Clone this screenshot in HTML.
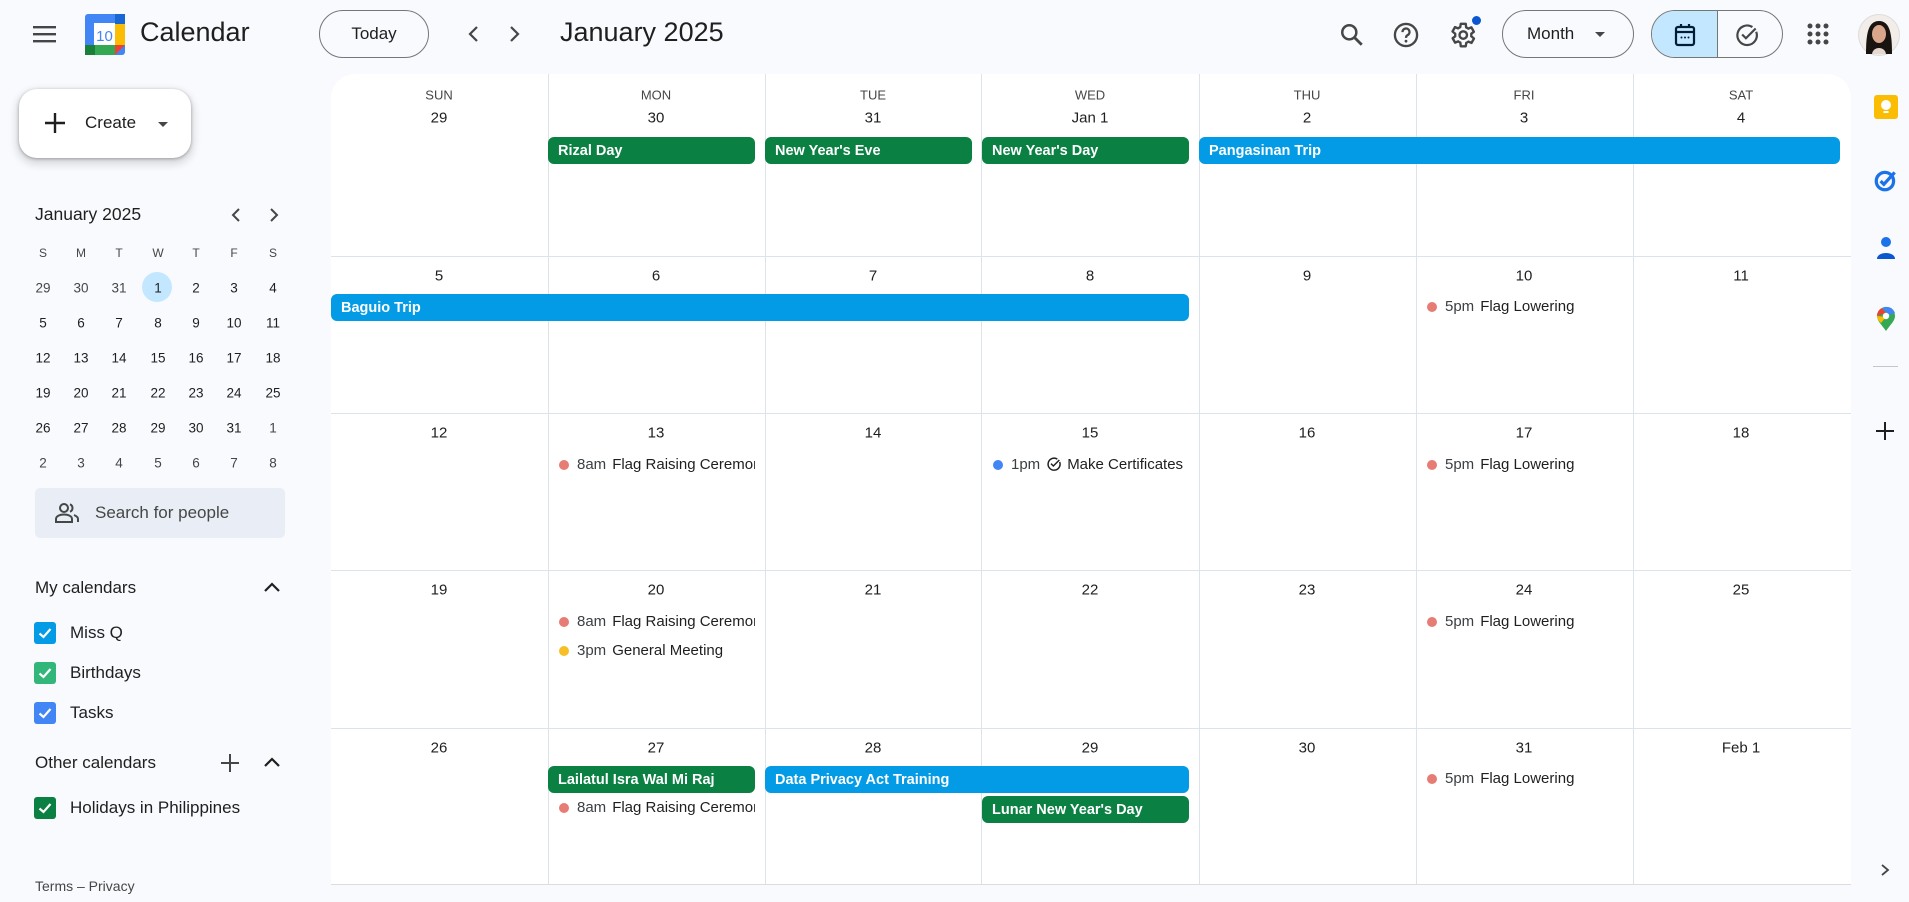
<!DOCTYPE html>
<html><head><meta charset="utf-8"><style>
*{box-sizing:border-box;margin:0;padding:0}
body{width:1909px;height:902px;background:#f8fafd;font-family:"Liberation Sans",sans-serif;color:#1f1f1f;position:relative;overflow:hidden}
.a{position:absolute}
.c{position:absolute;transform:translate(-50%,-50%);white-space:nowrap}
.grid{position:absolute;left:331px;top:74px;width:1520px;height:811px;background:#fff;border-radius:24px 24px 0 0;border-bottom:1px solid #dadce0}
.vl{position:absolute;top:0;bottom:0;width:1px;background:#dde3ea}
.hl{position:absolute;left:0;right:0;height:1px;background:#dde3ea}
.dh{position:absolute;transform:translate(-50%,-50%);font-size:13px;color:#444746}
.dn{position:absolute;transform:translate(-50%,-50%);font-size:15px;color:#1f1f1f}
.chip{position:absolute;height:27px;border-radius:6px;color:#fff;font-weight:bold;font-size:14.5px;line-height:28px;padding-left:10px;white-space:nowrap;overflow:hidden}
.g{background:#0b8043}.b{background:#039be5}
.ev{position:absolute;height:22px;line-height:22px;font-size:15px;white-space:nowrap;overflow:hidden;width:200px;padding-left:29px;color:#1f1f1f}
.ev i{position:absolute;left:11px;top:6px;width:10px;height:10px;border-radius:50%}
.ev s{text-decoration:none;color:#3c4043;margin-right:6px}
.mc{position:absolute;transform:translate(-50%,-50%);font-size:13.5px;color:#1f1f1f}
.cb{position:absolute;left:34px;width:22px;height:22px;border-radius:3px}
.cb svg{position:absolute;left:3px;top:3px}
.lbl{position:absolute;left:70px;font-size:17px;transform:translateY(-50%)}
</style></head><body>

<svg class="a" style="left:32px;top:23px" width="26" height="22" viewBox="0 0 26 22"><rect x="1" y="3" width="23" height="2.4" fill="#444746"/><rect x="1" y="10" width="23" height="2.4" fill="#444746"/><rect x="1" y="17" width="23" height="2.4" fill="#444746"/></svg>
<svg class="a" style="left:85px;top:14px" width="40" height="41" viewBox="0 0 40 41">
<rect x="0" y="0" width="40" height="41" rx="3" fill="#4285f4"/>
<rect x="30" y="0" width="10" height="10" fill="#1967d2"/>
<rect x="30" y="10" width="10" height="21" fill="#fbbc04"/>
<rect x="0" y="31" width="10" height="10" fill="#188038"/>
<rect x="10" y="31" width="20" height="10" fill="#34a853"/>
<polygon points="30,31 40,31 30,41" fill="#ea4335"/>
<rect x="9" y="9" width="21" height="22" fill="#fff"/>
<text x="19.5" y="27" font-family="Liberation Sans" font-size="15" fill="#4285f4" text-anchor="middle">10</text></svg>
<div class="a" style="left:140px;top:17px;font-size:27px;color:#1f1f1f">Calendar</div>
<div class="a" style="left:319px;top:10px;width:110px;height:48px;border:1px solid #747775;border-radius:24px;font-size:17px;text-align:center;line-height:46px">Today</div>
<svg class="a" style="left:466px;top:24px" width="16" height="20" viewBox="0 0 16 20"><path d="M11 3 L4 10 L11 17" stroke="#444746" stroke-width="2.2" fill="none"/></svg>
<svg class="a" style="left:506px;top:24px" width="16" height="20" viewBox="0 0 16 20"><path d="M5 3 L12 10 L5 17" stroke="#444746" stroke-width="2.2" fill="none"/></svg>
<div class="a" style="left:560px;top:17px;font-size:27px;color:#1f1f1f">January 2025</div>

<svg class="a" style="left:1339px;top:22px" width="26" height="26" viewBox="0 0 24 24"><circle cx="9.5" cy="9.5" r="6.5" stroke="#444746" stroke-width="2.3" fill="none"/><path d="M14.5 14.5 L21 21" stroke="#444746" stroke-width="2.6"/></svg>
<svg class="a" style="left:1392px;top:21px" width="28" height="28" viewBox="0 0 24 24"><circle cx="12" cy="12" r="9.5" stroke="#444746" stroke-width="2" fill="none"/><path d="M9 9.5 a3 3 0 1 1 4.2 2.7 c-1 .5-1.2 1.2-1.2 2.3" stroke="#444746" stroke-width="2" fill="none"/><circle cx="12" cy="17.3" r="1.2" fill="#444746"/></svg>
<svg class="a" style="left:1447px;top:20px" width="30" height="30" viewBox="0 0 24 24"><path d="M19.4 13a7.5 7.5 0 0 0 0-2l2.1-1.6-2-3.5-2.5 1a7 7 0 0 0-1.7-1L15 3h-4l-.4 2.7a7 7 0 0 0-1.7 1l-2.5-1-2 3.5L6.6 11a7.5 7.5 0 0 0 0 2l-2.1 1.6 2 3.5 2.5-1a7 7 0 0 0 1.7 1L11 21h4l.4-2.7a7 7 0 0 0 1.700-1l2.5 1 2-3.5z" stroke="#444746" stroke-width="1.9" fill="none" stroke-linejoin="round"/><circle cx="13" cy="12" r="3" stroke="#444746" stroke-width="1.9" fill="none"/></svg>
<div class="a" style="left:1472px;top:16px;width:9px;height:9px;border-radius:50%;background:#0b57d0"></div>
<div class="a" style="left:1502px;top:10px;width:132px;height:48px;border:1px solid #747775;border-radius:24px;font-size:17px;line-height:46px;padding-left:24px">Month</div>
<svg class="a" style="left:1594px;top:31px" width="12" height="7" viewBox="0 0 12 7"><path d="M1 1 L6 6 L11 1z" fill="#444746"/></svg>
<div class="a" style="left:1651px;top:10px;width:132px;height:48px;border:1px solid #747775;border-radius:24px;overflow:hidden">
<div class="a" style="left:0;top:0;width:66px;height:46px;background:#c2e7ff;border-right:1px solid #747775"></div></div>
<svg class="a" style="left:1674px;top:23px" width="22" height="24" viewBox="0 0 22 24"><rect x="2" y="4" width="18" height="18" rx="2" stroke="#001d35" stroke-width="2.2" fill="none"/><path d="M2 9 H20 M7 1 V5 M15 1 V5" stroke="#001d35" stroke-width="2.2"/><circle cx="7.5" cy="14.5" r="1" fill="#001d35"/><circle cx="11" cy="14.5" r="1" fill="#001d35"/><circle cx="14.5" cy="14.5" r="1" fill="#001d35"/></svg>
<svg class="a" style="left:1734px;top:22px" width="26" height="26" viewBox="0 0 24 24"><path d="M20.5 9 A9 9 0 1 1 17 4.7" stroke="#444746" stroke-width="2" fill="none"/><path d="M7.5 11.5 L11 15 L20 6" stroke="#444746" stroke-width="2" fill="none"/></svg>
<svg class="a" style="left:1807px;top:23px" width="22" height="22" viewBox="0 0 22 22"><g fill="#444746"><circle cx="3" cy="3" r="2.5"/><circle cx="11" cy="3" r="2.5"/><circle cx="19" cy="3" r="2.5"/><circle cx="3" cy="11" r="2.5"/><circle cx="11" cy="11" r="2.5"/><circle cx="19" cy="11" r="2.5"/><circle cx="3" cy="19" r="2.5"/><circle cx="11" cy="19" r="2.5"/><circle cx="19" cy="19" r="2.5"/></g></svg>
<svg class="a" style="left:1858px;top:14px" width="42" height="42" viewBox="0 0 42 42"><circle cx="21" cy="21" r="20.5" fill="#f2ede8" stroke="#ddd"/><path d="M8 40 C8 20 10 7 21 7 C32 7 34 20 34 40z" fill="#1a1411"/><ellipse cx="21" cy="20" rx="7" ry="9" fill="#d9a68b"/><path d="M14 40 C15 32 27 32 28 40z" fill="#e6d8d0"/></svg>

<div class="a" style="left:19px;top:89px;width:172px;height:69px;background:#fff;border-radius:18px;box-shadow:0 1px 3px rgba(0,0,0,.3),0 4px 8px 3px rgba(0,0,0,.12)"></div>
<svg class="a" style="left:44px;top:112px" width="22" height="22" viewBox="0 0 22 22"><path d="M11 1 V21 M1 11 H21" stroke="#1f1f1f" stroke-width="2.4"/></svg>
<div class="a" style="left:85px;top:113px;font-size:17px;font-weight:500">Create</div>
<svg class="a" style="left:157px;top:121px" width="12" height="7" viewBox="0 0 12 7"><path d="M1 1 L6 6 L11 1z" fill="#444746"/></svg>

<div class="a" style="left:35px;top:204px;font-size:17.5px">January 2025</div>
<svg class="a" style="left:230px;top:207px" width="12" height="16" viewBox="0 0 12 16"><path d="M9 2 L3 8 L9 14" stroke="#444746" stroke-width="2" fill="none"/></svg>
<svg class="a" style="left:268px;top:207px" width="12" height="16" viewBox="0 0 12 16"><path d="M3 2 L9 8 L3 14" stroke="#444746" stroke-width="2" fill="none"/></svg>
<div class="a" style="left:142px;top:272px;width:30px;height:30px;border-radius:50%;background:#c2e7ff"></div>

<div class="mc" style="left:43px;top:253px;color:#444746;font-size:12px">S</div><div class="mc" style="left:81px;top:253px;color:#444746;font-size:12px">M</div><div class="mc" style="left:119px;top:253px;color:#444746;font-size:12px">T</div><div class="mc" style="left:158px;top:253px;color:#444746;font-size:12px">W</div><div class="mc" style="left:196px;top:253px;color:#444746;font-size:12px">T</div><div class="mc" style="left:234px;top:253px;color:#444746;font-size:12px">F</div><div class="mc" style="left:273px;top:253px;color:#444746;font-size:12px">S</div>
<div class="mc" style="left:43px;top:288px;color:#444746">29</div><div class="mc" style="left:81px;top:288px;color:#444746">30</div><div class="mc" style="left:119px;top:288px;color:#444746">31</div><div class="mc" style="left:158px;top:288px">1</div><div class="mc" style="left:196px;top:288px">2</div><div class="mc" style="left:234px;top:288px">3</div><div class="mc" style="left:273px;top:288px">4</div>
<div class="mc" style="left:43px;top:323px">5</div><div class="mc" style="left:81px;top:323px">6</div><div class="mc" style="left:119px;top:323px">7</div><div class="mc" style="left:158px;top:323px">8</div><div class="mc" style="left:196px;top:323px">9</div><div class="mc" style="left:234px;top:323px">10</div><div class="mc" style="left:273px;top:323px">11</div>
<div class="mc" style="left:43px;top:358px">12</div><div class="mc" style="left:81px;top:358px">13</div><div class="mc" style="left:119px;top:358px">14</div><div class="mc" style="left:158px;top:358px">15</div><div class="mc" style="left:196px;top:358px">16</div><div class="mc" style="left:234px;top:358px">17</div><div class="mc" style="left:273px;top:358px">18</div>
<div class="mc" style="left:43px;top:393px">19</div><div class="mc" style="left:81px;top:393px">20</div><div class="mc" style="left:119px;top:393px">21</div><div class="mc" style="left:158px;top:393px">22</div><div class="mc" style="left:196px;top:393px">23</div><div class="mc" style="left:234px;top:393px">24</div><div class="mc" style="left:273px;top:393px">25</div>
<div class="mc" style="left:43px;top:428px">26</div><div class="mc" style="left:81px;top:428px">27</div><div class="mc" style="left:119px;top:428px">28</div><div class="mc" style="left:158px;top:428px">29</div><div class="mc" style="left:196px;top:428px">30</div><div class="mc" style="left:234px;top:428px">31</div><div class="mc" style="left:273px;top:428px;color:#444746">1</div>
<div class="mc" style="left:43px;top:463px;color:#444746">2</div><div class="mc" style="left:81px;top:463px;color:#444746">3</div><div class="mc" style="left:119px;top:463px;color:#444746">4</div><div class="mc" style="left:158px;top:463px;color:#444746">5</div><div class="mc" style="left:196px;top:463px;color:#444746">6</div><div class="mc" style="left:234px;top:463px;color:#444746">7</div><div class="mc" style="left:273px;top:463px;color:#444746">8</div>

<div class="a" style="left:35px;top:488px;width:250px;height:50px;background:#e9eef6;border-radius:5px"></div>
<svg class="a" style="left:55px;top:502px" width="24" height="22" viewBox="0 0 24 22"><circle cx="9" cy="6" r="4" stroke="#444746" stroke-width="2" fill="none"/><path d="M1 20 V17 C1 14 5 12.5 9 12.5 C13 12.5 17 14 17 17 V20z" stroke="#444746" stroke-width="2" fill="none"/><path d="M15 2.3 A4 4 0 0 1 15 9.7 M19 13 C21.5 14 23 15.5 23 17 V20" stroke="#444746" stroke-width="2" fill="none"/></svg>
<div class="a" style="left:95px;top:503px;font-size:17px;color:#444746">Search for people</div>

<div class="lbl" style="left:35px;top:588px">My calendars</div>
<svg class="a" style="left:263px;top:581px" width="18" height="12" viewBox="0 0 18 12"><path d="M2 10 L9 3 L16 10" stroke="#1f1f1f" stroke-width="2.2" fill="none"/></svg>
<div class="cb" style="top:622px;background:#039be5"><svg width="16" height="16" viewBox="0 0 16 16"><path d="M2.5 8.5 L6.5 12 L13.5 4" stroke="#fff" stroke-width="2.2" fill="none"/></svg></div>
<div class="lbl" style="top:633px">Miss Q</div>
<div class="cb" style="top:662px;background:#33b679"><svg width="16" height="16" viewBox="0 0 16 16"><path d="M2.5 8.5 L6.5 12 L13.5 4" stroke="#fff" stroke-width="2.2" fill="none"/></svg></div>
<div class="lbl" style="top:673px">Birthdays</div>
<div class="cb" style="top:702px;background:#4285f4"><svg width="16" height="16" viewBox="0 0 16 16"><path d="M2.5 8.5 L6.5 12 L13.5 4" stroke="#fff" stroke-width="2.2" fill="none"/></svg></div>
<div class="lbl" style="top:713px">Tasks</div>
<div class="lbl" style="left:35px;top:763px">Other calendars</div>
<svg class="a" style="left:220px;top:753px" width="20" height="20" viewBox="0 0 20 20"><path d="M10 1 V19 M1 10 H19" stroke="#444746" stroke-width="2"/></svg>
<svg class="a" style="left:263px;top:756px" width="18" height="12" viewBox="0 0 18 12"><path d="M2 10 L9 3 L16 10" stroke="#1f1f1f" stroke-width="2.2" fill="none"/></svg>
<div class="cb" style="top:797px;background:#0b8043"><svg width="16" height="16" viewBox="0 0 16 16"><path d="M2.5 8.5 L6.5 12 L13.5 4" stroke="#fff" stroke-width="2.2" fill="none"/></svg></div>
<div class="lbl" style="top:808px">Holidays in Philippines</div>
<div class="a" style="left:35px;top:878px;font-size:14px;color:#444746">Terms – Privacy</div>

<div class="grid">
<div class="vl" style="left:217px"></div><div class="vl" style="left:434px"></div><div class="vl" style="left:650px"></div><div class="vl" style="left:868px"></div><div class="vl" style="left:1085px"></div><div class="vl" style="left:1302px"></div>
<div class="hl" style="top:182px"></div><div class="hl" style="top:339px"></div><div class="hl" style="top:496px"></div><div class="hl" style="top:654px"></div>
</div>
<div class="dh" style="left:439px;top:95px">SUN</div><div class="dh" style="left:656px;top:95px">MON</div><div class="dh" style="left:873px;top:95px">TUE</div><div class="dh" style="left:1090px;top:95px">WED</div><div class="dh" style="left:1307px;top:95px">THU</div><div class="dh" style="left:1524px;top:95px">FRI</div><div class="dh" style="left:1741px;top:95px">SAT</div>
<div class="dn" style="left:439px;top:118px">29</div><div class="dn" style="left:656px;top:118px">30</div><div class="dn" style="left:873px;top:118px">31</div><div class="dn" style="left:1090px;top:118px">Jan 1</div><div class="dn" style="left:1307px;top:118px">2</div><div class="dn" style="left:1524px;top:118px">3</div><div class="dn" style="left:1741px;top:118px">4</div>
<div class="dn" style="left:439px;top:276px">5</div><div class="dn" style="left:656px;top:276px">6</div><div class="dn" style="left:873px;top:276px">7</div><div class="dn" style="left:1090px;top:276px">8</div><div class="dn" style="left:1307px;top:276px">9</div><div class="dn" style="left:1524px;top:276px">10</div><div class="dn" style="left:1741px;top:276px">11</div>
<div class="dn" style="left:439px;top:433px">12</div><div class="dn" style="left:656px;top:433px">13</div><div class="dn" style="left:873px;top:433px">14</div><div class="dn" style="left:1090px;top:433px">15</div><div class="dn" style="left:1307px;top:433px">16</div><div class="dn" style="left:1524px;top:433px">17</div><div class="dn" style="left:1741px;top:433px">18</div>
<div class="dn" style="left:439px;top:590px">19</div><div class="dn" style="left:656px;top:590px">20</div><div class="dn" style="left:873px;top:590px">21</div><div class="dn" style="left:1090px;top:590px">22</div><div class="dn" style="left:1307px;top:590px">23</div><div class="dn" style="left:1524px;top:590px">24</div><div class="dn" style="left:1741px;top:590px">25</div>
<div class="dn" style="left:439px;top:748px">26</div><div class="dn" style="left:656px;top:748px">27</div><div class="dn" style="left:873px;top:748px">28</div><div class="dn" style="left:1090px;top:748px">29</div><div class="dn" style="left:1307px;top:748px">30</div><div class="dn" style="left:1524px;top:748px">31</div><div class="dn" style="left:1741px;top:748px">Feb 1</div>

<div class="chip g" style="left:548px;top:137px;width:207px">Rizal Day</div>
<div class="chip g" style="left:765px;top:137px;width:207px">New Year's Eve</div>
<div class="chip g" style="left:982px;top:137px;width:207px">New Year's Day</div>
<div class="chip b" style="left:1199px;top:137px;width:641px">Pangasinan Trip</div>
<div class="chip b" style="left:331px;top:294px;width:858px">Baguio Trip</div>
<div class="chip g" style="left:548px;top:766px;width:207px">Lailatul Isra Wal Mi Raj</div>
<div class="chip b" style="left:765px;top:766px;width:424px">Data Privacy Act Training</div>
<div class="chip g" style="left:982px;top:796px;width:207px">Lunar New Year's Day</div>

<div class="ev" style="left:1416px;top:296px"><i style="background:#e67c73"></i><s>5pm</s>Flag Lowering</div>
<div class="ev" style="left:548px;top:454px;width:207px"><i style="background:#e67c73"></i><s>8am</s>Flag Raising Ceremony</div>
<div class="ev" style="left:982px;top:454px;width:207px"><i style="background:#4285f4"></i><s>1pm</s><svg width="16" height="16" viewBox="0 0 24 24" style="vertical-align:-3px;margin-right:5px"><path d="M20.5 9 A9 9 0 1 1 17 4.7" stroke="#1f1f1f" stroke-width="2.2" fill="none"/><path d="M7.5 11.5 L11 15 L20 6" stroke="#1f1f1f" stroke-width="2.2" fill="none"/></svg>Make Certificates</div>
<div class="ev" style="left:1416px;top:454px"><i style="background:#e67c73"></i><s>5pm</s>Flag Lowering</div>
<div class="ev" style="left:548px;top:611px;width:207px"><i style="background:#e67c73"></i><s>8am</s>Flag Raising Ceremony</div>
<div class="ev" style="left:548px;top:640px;width:207px"><i style="background:#f6bf26"></i><s>3pm</s>General Meeting</div>
<div class="ev" style="left:1416px;top:611px"><i style="background:#e67c73"></i><s>5pm</s>Flag Lowering</div>
<div class="ev" style="left:548px;top:797px;width:207px"><i style="background:#e67c73"></i><s>8am</s>Flag Raising Ceremony</div>
<div class="ev" style="left:1416px;top:768px"><i style="background:#e67c73"></i><s>5pm</s>Flag Lowering</div>

<div class="a" style="left:1874px;top:95px;width:24px;height:24px;border-radius:3px;background:#fbbc04"></div>
<svg class="a" style="left:1879px;top:99px" width="14" height="16" viewBox="0 0 14 16"><circle cx="7" cy="6" r="5" fill="#fff"/><rect x="4.5" y="12" width="5" height="2" fill="#fff"/></svg>
<svg class="a" style="left:1873px;top:167px" width="26" height="26" viewBox="0 0 24 24"><circle cx="11" cy="13" r="8" stroke="#1a73e8" stroke-width="3" fill="none"/><path d="M7 13 L10 16 L20 5" stroke="#1a73e8" stroke-width="3" fill="none"/></svg>
<svg class="a" style="left:1875px;top:236px" width="22" height="24" viewBox="0 0 22 24"><circle cx="11" cy="6" r="5" fill="#1a73e8"/><path d="M2 23 C2 15 20 15 20 23z" fill="#0b57d0"/></svg>
<svg class="a" style="left:1874px;top:306px" width="24" height="26" viewBox="0 0 24 26"><path d="M12 25 C8 19 3 15 3 10 A9 9 0 0 1 21 10 C21 15 16 19 12 25z" fill="#34a853"/><path d="M3 10 A9 9 0 0 1 8 2 L12 7z" fill="#ea4335"/><path d="M8 2 A9 9 0 0 1 21 7 L15 9z" fill="#4285f4"/><path d="M3 10 C3 13 5 15 7 17 L12 11z" fill="#fbbc04"/><circle cx="12" cy="10" r="3.2" fill="#fff"/></svg>
<div class="a" style="left:1873px;top:366px;width:25px;height:1px;background:#c4c7c5"></div>
<svg class="a" style="left:1875px;top:421px" width="20" height="20" viewBox="0 0 20 20"><path d="M10 1 V19 M1 10 H19" stroke="#1f1f1f" stroke-width="2"/></svg>
<svg class="a" style="left:1879px;top:863px" width="12" height="14" viewBox="0 0 12 14"><path d="M3 2 L9 7 L3 12" stroke="#444746" stroke-width="1.8" fill="none"/></svg>
</body></html>
